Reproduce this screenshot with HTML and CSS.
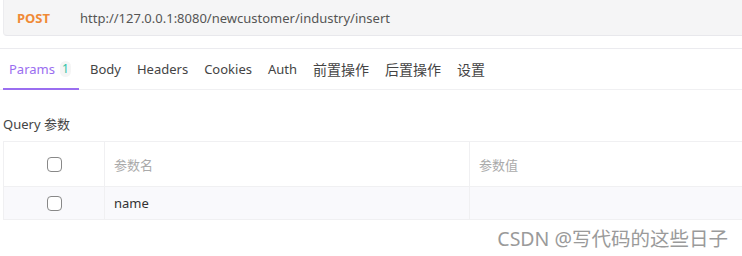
FILE: index.html
```html
<!DOCTYPE html>
<html lang="en">

<head>
  <meta charset="UTF-8">
  <meta name="viewport" content="width=device-width, initial-scale=1.0">
  <title>Params</title>
  <link rel="stylesheet" href="styles.css">
</head>

<body>
  <!-- 请求地址 -->
  <div class="url-bar">
    <span class="method">POST</span>
    <span class="url">http://127.0.0.1:8080/newcustomer/industry/insert</span>
  </div>

  <!-- 标签页 -->
  <div class="tabs">
    <span class="tab current">Params <i class="badge">1</i></span>
    <span class="tab">Body</span>
    <span class="tab">Headers</span>
    <span class="tab">Cookies</span>
    <span class="tab">Auth</span>
    <span class="tab cn">前置操作</span>
    <span class="tab cn">后置操作</span>
    <span class="tab cn">设置</span>
  </div>

  <div class="title">Query 参数</div>

  <!-- 参数表格 -->
  <div class="table">
    <div class="row head">
      <div class="cell check"><span class="box"></span></div>
      <div class="cell name">参数名</div>
      <div class="cell value">参数值</div>
    </div>
    <div class="row">
      <div class="cell check"><span class="box"></span></div>
      <div class="cell name">name</div>
      <div class="cell value"></div>
    </div>
  </div>

  <div class="mark">CSDN @写代码的这些日子</div>
</body>

</html>
```

FILE: styles.css
```css
* {
  margin: 0;
  padding: 0;
  box-sizing: border-box;
}

body {
  width: 742px;
  height: 256px;
  background-color: #fff;
  font-family: "Noto Sans", "Noto Sans CJK SC", sans-serif;
  font-size: 13px;
  color: #333;
  overflow: hidden;
}

.url-bar {
  display: flex;
  align-items: center;
  height: 36px;
  margin-left: 3px;
  padding-left: 13px;
  background-color: #f5f5f6;
  border-bottom: 1px solid #e8e8ec;
  border-left: 1px solid #ececef;
  border-radius: 0 0 0 4px;
}

.method {
  width: 63px;
  font-weight: bold;
  font-size: 13px;
  color: #f08a37;
}

.url {
  color: #555;
  font-size: 13px;
}

.tabs {
  display: flex;
  margin-top: 12px;
  padding-left: 3px;
  height: 42px;
  border-top: 1px solid #ebebef;
  border-bottom: 1px solid #f0f0f2;
}

.tab {
  display: flex;
  align-items: center;
  padding: 0 8px;
  color: #444;
  font-size: 13px;
}

.tab.cn {
  font-size: 14px;
}

.tab.current {
  width: 76px;
  padding-left: 6px;
  color: #9a6ef0;
  border-bottom: 2px solid #9a6ef0;
  margin-right: 3px;
  margin-bottom: -1px;
}

.badge {
  display: inline-block;
  width: 16px;
  height: 16px;
  margin-left: 5px;
  border-radius: 8px;
  background-color: #f5f5f5;
  color: #2bc3a5;
  font-style: normal;
  font-size: 12px;
  line-height: 16px;
  text-align: center;
}

.title {
  margin: 25px 0 0 3px;
  font-size: 13px;
  color: #444;
  line-height: 18px;
}

.table {
  margin: 8px 0 0 3px;
  border-top: 1px solid #f0f0f2;
  border-left: 1px solid #f0f0f2;
}

.row {
  display: flex;
  height: 45px;
  border-bottom: 1px solid #f0f0f2;
}

.row + .row {
  height: 33px;
  background-color: #f9f9fc;
}

.cell {
  display: flex;
  align-items: center;
  border-right: 1px solid #f0f0f2;
  padding-left: 9px;
}

.head .cell {
  color: #aaa;
}

.cell.check {
  width: 101px;
  justify-content: center;
  padding-left: 0;
}

.cell.name {
  width: 365px;
}

.cell.value {
  flex: 1;
  border-right: none;
}

.box {
  width: 15px;
  height: 15px;
  border: 1px solid #888;
  border-radius: 4px;
  background-color: #fff;
}

.mark {
  margin: 3px 14px 0 0;
  text-align: right;
  font-size: 19.5px;
  color: #9a9a9a;
}
```
